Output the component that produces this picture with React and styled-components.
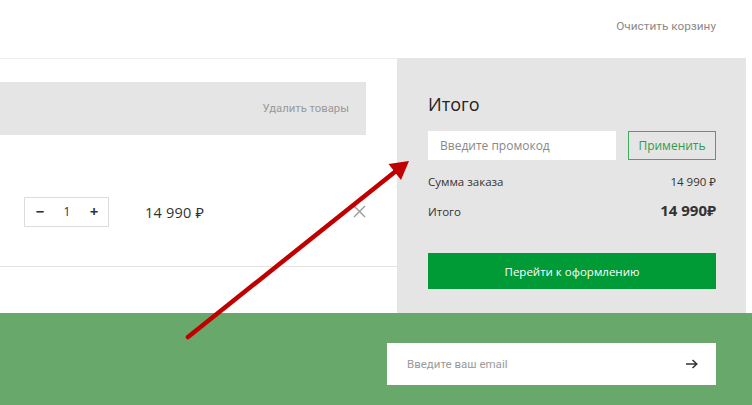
import React from "react";
import styled, { createGlobalStyle } from "styled-components";

const Global = createGlobalStyle`
  html, body { margin: 0; padding: 0; background: #fff; }
  body { font-family: "Open Sans", "Noto Sans", Arial, sans-serif; color: #333; }
  * { box-sizing: border-box; }
`;

const Page = styled.div`
  position: relative;
  width: 752px;
  height: 405px;
  overflow: hidden;
`;

const Header = styled.header`
  height: 58px;
  display: flex;
  justify-content: flex-end;
  align-items: center;
  padding: 0 36px 6px 0;
`;

const TopLink = styled.span`
  font-family: Roboto, "Open Sans", sans-serif;
  font-size: 11.8px;
  color: #8a8a8a;
`;

const Main = styled.div`
  display: flex;
  height: 255px;
`;

const Cart = styled.section`
  width: 397px;
  border-top: 1px solid #ececec;
  padding-top: 23px;
`;

const ToolBar = styled.div`
  width: 366px;
  height: 53px;
  background: #e5e5e5;
  display: flex;
  align-items: center;
  justify-content: flex-end;
  padding-right: 17px;
`;

const ToolLink = styled.span`
  font-family: Roboto, "Open Sans", sans-serif;
  font-size: 11.3px;
  color: #999;
`;

const ItemRow = styled.div`
  height: 132px;
  padding: 22px 31px 0 24px;
  display: flex;
  align-items: center;
  border-bottom: 1px solid #e3e3e3;
`;

const Qty = styled.div`
  width: 85px;
  height: 30px;
  border: 1px solid #dcdcdc;
  display: flex;
  align-items: center;
  justify-content: space-between;
  padding: 0 8px 0 9px;
  font-size: 12px;
  color: #333;
`;

const QtyBtn = styled.span`
  width: 12px;
  text-align: center;
  font-size: 15px;
  font-weight: 700;
  line-height: 1;
`;

const Price = styled.span`
  margin-left: 36px;
  font-size: 14.5px;
  color: #333;
  letter-spacing: 0.2px;
`;

const Remove = styled.span`
  margin-left: auto;
  display: flex;
  width: 13px;
  height: 13px;
`;

const Summary = styled.aside`
  width: 349px;
  background: #e5e5e5;
  padding: 35px 30px 0 31px;
`;

const Title = styled.h2`
  margin: 0;
  font-size: 18px;
  font-weight: 500;
  line-height: 22px;
  color: #222;
`;

const PromoRow = styled.div`
  margin-top: 16px;
  display: flex;
  gap: 12px;
`;

const PromoInput = styled.div`
  width: 188px;
  height: 29px;
  background: #fff;
  display: flex;
  align-items: center;
  padding-left: 12px;
  font-size: 12px;
  color: #888;
`;

const OutlineBtn = styled.div`
  flex: 1;
  height: 29px;
  border: 1px solid #3fae5a;
  display: flex;
  align-items: center;
  justify-content: center;
  font-size: 12px;
  color: #2f9c4c;
`;

const Line = styled.div`
  display: flex;
  justify-content: space-between;
  align-items: ${(p) => (p.$total ? "flex-end" : "center")};
  margin-top: ${(p) => p.$mt}px;
  font-size: 11.5px;
  color: #333;
  line-height: 16px;
`;

const Value = styled.span`
  font-size: ${(p) => (p.$big ? "15px" : "11.5px")};
  font-weight: ${(p) => (p.$big ? 700 : 400)};
  line-height: ${(p) => (p.$big ? "20px" : "16px")};
  color: #333;
`;

const CheckoutBtn = styled.div`
  margin-top: 33px;
  height: 36px;
  background: #009a36;
  color: #fff;
  font-size: 11.5px;
  font-weight: 500;
  display: flex;
  align-items: center;
  justify-content: center;
`;

const Footer = styled.footer`
  height: 92px;
  background: #69a86b;
  display: flex;
  justify-content: flex-end;
  padding: 30px 36px 0 0;
`;

const EmailBox = styled.div`
  width: 329px;
  height: 42px;
  background: #fff;
  display: flex;
  align-items: center;
  justify-content: space-between;
  padding: 0 18px 0 20px;
`;

const EmailPlaceholder = styled.span`
  font-family: Roboto, "Open Sans", sans-serif;
  font-size: 11.5px;
  color: #9a9a9a;
`;

const Overlay = styled.svg`
  position: absolute;
  left: 0;
  top: 0;
  pointer-events: none;
`;

export default function App() {
  return (
    <>
      <Global />
      <Page>
        <Header>
          <TopLink>Очистить корзину</TopLink>
        </Header>
        <Main>
          <Cart>
            <ToolBar>
              <ToolLink>Удалить товары</ToolLink>
            </ToolBar>
            <ItemRow>
              <Qty>
                <QtyBtn>−</QtyBtn>
                <span>1</span>
                <QtyBtn>+</QtyBtn>
              </Qty>
              <Price>14 990 ₽</Price>
              <Remove>
                <svg width="13" height="13" viewBox="0 0 13 13">
                  <path d="M1 1L12 12M12 1L1 12" stroke="#9a9a9a" strokeWidth="1.4" />
                </svg>
              </Remove>
            </ItemRow>
          </Cart>
          <Summary>
            <Title>Итого</Title>
            <PromoRow>
              <PromoInput>Введите промокод</PromoInput>
              <OutlineBtn>Применить</OutlineBtn>
            </PromoRow>
            <Line $mt={14}>
              <span>Сумма заказа</span>
              <Value>14 990 ₽</Value>
            </Line>
            <Line $mt={10} $total>
              <span>Итого</span>
              <Value $big>14 990₽</Value>
            </Line>
            <CheckoutBtn>Перейти к оформлению</CheckoutBtn>
          </Summary>
        </Main>
        <Footer>
          <EmailBox>
            <EmailPlaceholder>Введите ваш email</EmailPlaceholder>
            <svg width="12" height="10" viewBox="0 0 12 10">
              <path d="M0 5H10.5M6.5 1L10.8 5L6.5 9" stroke="#333" strokeWidth="1.5" fill="none" />
            </svg>
          </EmailBox>
        </Footer>
        <Overlay width="752" height="405" viewBox="0 0 752 405">
          <line x1="188" y1="337" x2="396" y2="171" stroke="#c00000" strokeWidth="4.5" strokeLinecap="round" />
          <polygon points="409,161 401,180 388.5,164" fill="#c00000" />
        </Overlay>
      </Page>
    </>
  );
}
